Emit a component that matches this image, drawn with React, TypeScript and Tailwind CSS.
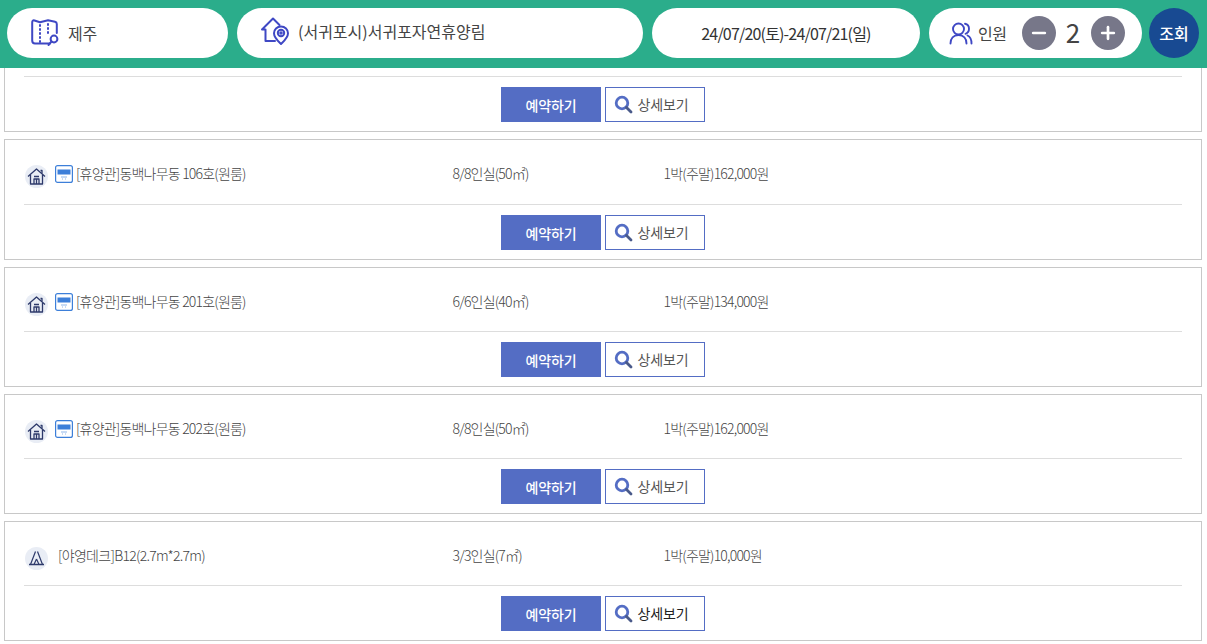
import { Minus, Plus } from "lucide-react";

const font = "font-['Noto_Sans_CJK_KR','Noto_Sans',sans-serif]";

function MapIcon() {
  return (
    <svg width="30" height="30" viewBox="0 0 30 30" fill="none" stroke="#3f48c4" strokeWidth="2" strokeLinecap="round" strokeLinejoin="round">
      <path d="M20 25.500H5c-2 0-2.800-1.200-2.800-3V4.500C2.200 3 3 2 4.500 2.500L10 4.200 18 2.200 25 3.800c1.200.3 1.800 1 1.800 2.200V15" />
      <path d="M10 7v1M10 11v1M10 15v1M10 19v1M10 23v1M18 6v1M18 10v1M18 14v1" strokeDasharray="1 1" />
      <circle cx="24" cy="21" r="3.400" />
      <path d="M21.500 23.500L18.500 27" />
    </svg>
  );
}

function HomePinIcon() {
  return (
    <svg width="30" height="30" viewBox="0 0 30 30" fill="none" stroke="#3f48c4" strokeWidth="2" strokeLinecap="round" strokeLinejoin="round">
      <path d="M15 25H5.500V13.500H2L13 2.500 19.500 9" />
      <path d="M21 10.500c-4 0-7 3-7 6.800 0 4.500 4.500 8.200 7 10.700 2.500-2.500 7-6.200 7-10.700 0-3.800-3-6.800-7-6.800z" />
      <circle cx="21" cy="17" r="3.200" />
      <circle cx="21" cy="17" r=".8" />
    </svg>
  );
}

function PeopleIcon() {
  return (
    <svg width="24" height="24" viewBox="0 0 24 24" fill="none" stroke="#3f48c4" strokeWidth="1.900" strokeLinecap="round" strokeLinejoin="round">
      <circle cx="9.500" cy="8" r="5.500" />
      <path d="M1.500 22.500c0-5 3-8.500 8-8.500s8 3.500 8 8.500" />
      <path d="M16 2.800c2.600.5 4 2.600 4 5 0 2.300-1.300 4.300-3.500 5" />
      <path d="M18.500 14.500c2.600 1.200 4 4 4 8" />
    </svg>
  );
}

function HouseBadge() {
  return (
    <span className="ml-[1px] mt-[6px] flex h-[23px] w-[23px] shrink-0 items-center justify-center rounded-full bg-[#e9edf5]">
      <svg width="19" height="19" viewBox="0 0 19 19" fill="none" stroke="#2e3a6b" strokeWidth="1.300" strokeLinejoin="round">
        <path d="M1 9.500L9.500 2 18 9.500" />
        <path d="M3.500 8v9h12V8" />
        <path d="M7 17v-5h5v5M9.500 12v5M7 9.500h5" />
        <path d="M13.500 3.500H15v3" />
      </svg>
    </span>
  );
}

function TentBadge() {
  return (
    <span className="ml-[1px] mt-[6px] flex h-[23px] w-[23px] shrink-0 items-center justify-center rounded-full bg-[#e9edf5]">
      <svg width="17" height="17" viewBox="0 0 17 17" fill="none" stroke="#2e3a6b" strokeWidth="1.200" strokeLinejoin="round">
        <path d="M7.500 1.500L2.500 14.500M9.500 1.500l5 13" />
        <path d="M8.500 9L6 14.500M8.500 9l2.500 5.500" />
        <path d="M1 14.500h15" strokeWidth="1.500" />
      </svg>
    </span>
  );
}

function AcIcon() {
  return (
    <svg width="18" height="18" viewBox="0 0 18 18" className="block shrink-0">
      <rect x=".6" y=".6" width="16.800" height="16.800" rx="2" fill="#fff" stroke="#3d7fd9" strokeWidth="1.200" />
      <rect x="2.500" y="4.500" width="13" height="5" fill="#3d7fd9" />
      <path d="M6 12h6M7 14h1M10 14h1" stroke="#8fb6ea" strokeWidth="1" />
    </svg>
  );
}

function Actions({ dark }: { dark?: boolean }) {
  return (
    <div className="flex justify-center gap-1">
      <button className="h-[35px] w-[100px] bg-[#546dc4] pt-[2px] text-[14px] font-medium tracking-[-0.1px] text-white">예약하기</button>
      <button className={`flex h-[35px] w-[100px] items-center justify-center gap-[4px] border border-[#546dc4] bg-white pb-[1px] pr-[7px] text-[14px] tracking-[-0.1px] ${dark ? "text-[#222]" : "text-[#555]"}`}>
        <svg width="19" height="19" viewBox="0 0 19 19" fill="none" strokeLinecap="round">
          <circle cx="8" cy="8" r="5.800" stroke="#546dc4" strokeWidth="2.800" />
          <path d="M12.500 12.500L17 17" stroke="#4a5a8a" strokeWidth="2.800" />
        </svg>
        상세보기
      </button>
    </div>
  );
}

type Room = { name: string; cap: string; price: string; tent?: boolean; h: string; row: string };

const rooms: Room[] = [
  { name: "[휴양관]동백나무동 106호(원룸)", cap: "8/8인실(50㎡)", price: "1박(주말)162,000원", h: "h-[121px]", row: "h-[65px] pt-[3px]" },
  { name: "[휴양관]동백나무동 201호(원룸)", cap: "6/6인실(40㎡)", price: "1박(주말)134,000원", h: "h-[120px]", row: "h-[64px] pt-[4px]" },
  { name: "[휴양관]동백나무동 202호(원룸)", cap: "8/8인실(50㎡)", price: "1박(주말)162,000원", h: "h-[120px]", row: "h-[64px] pt-[4px]" },
  { name: "[야영데크]B12(2.7m*2.7m)", cap: "3/3인실(7㎡)", price: "1박(주말)10,000원", tent: true, h: "h-[120px]", row: "h-[64px] pt-[4px]" },
];

function RoomCard({ room, last }: { room: Room; last?: boolean }) {
  return (
    <div className={`${room.h} border border-[#c8c8c8] px-[19px]`}>
      <div className={`${room.row} flex items-center border-b border-[#ddd] text-[14px] font-light tracking-[-0.8px] text-[#444]`}>
        <div className="flex w-[428px] items-center">
          {room.tent ? <TentBadge /> : <HouseBadge />}
          {!room.tent && <span className="ml-[7px]"><AcIcon /></span>}
          <span className={`${room.tent ? "ml-[10px] tracking-[-0.7px]" : "ml-[3px]"}`}>{room.name}</span>
        </div>
        <div className="w-[212px] pl-[0.5px]">{room.cap}</div>
        <div className="ml-[-0.5px]">{room.price}</div>
      </div>
      <div className="pt-[10px]">
        <Actions dark={last} />
      </div>
    </div>
  );
}

export default function App() {
  return (
    <div className={`h-[644px] w-[1207px] overflow-hidden bg-white ${font}`}>
      <header className="flex h-[68px] items-start gap-[9px] bg-[#2bad8b] pl-[7px] pt-[8px]">
        <div className="flex h-[50px] w-[221px] items-center gap-[8px] rounded-full bg-white pl-[23px] text-[16px] tracking-[-0.3px] text-[#444]">
          <MapIcon />
          제주
        </div>
        <div className="flex h-[50px] w-[406px] items-center gap-[8px] rounded-full bg-white pb-[4px] pl-[23px] text-[16px] text-[#444]">
          <HomePinIcon />
          (서귀포시)서귀포자연휴양림
        </div>
        <div className="flex h-[50px] w-[268px] items-center justify-center rounded-full bg-white text-[16px] tracking-[-0.82px] text-[#333]">
          24/07/20(토)-24/07/21(일)
        </div>
        <div className="flex h-[50px] w-[213px] items-center rounded-full bg-white pl-[20px] text-[15px] text-[#444]">
          <PeopleIcon />
          <span className="ml-[5px] text-[16px] tracking-[-0.5px]">인원</span>
          <span className="ml-[16px] flex h-[34px] w-[34px] items-center justify-center rounded-full bg-[#777789]">
            <Minus size={20} strokeWidth={3.2} className="text-white" />
          </span>
          <span className="w-[35px] pb-[2px] pr-[2px] text-center text-[26px] leading-none text-[#444]">2</span>
          <span className="flex h-[34px] w-[34px] items-center justify-center rounded-full bg-[#777789]">
            <Plus size={20} strokeWidth={3.2} className="text-white" />
          </span>
        </div>
        <button className="ml-[-2px] h-[50px] w-[50px] rounded-full bg-[#184a92] text-[16px] font-medium text-white">조회</button>
      </header>
      <div className="flex flex-col gap-[7px] pl-[4px] pr-[5px]">
        <div className="h-[64px] border-x border-b border-[#c8c8c8] px-[19px] pt-[8px]">
          <div className="border-t border-[#ddd] pt-[10px]">
            <Actions />
          </div>
        </div>
        {rooms.map((r, i) => (
          <RoomCard key={r.name} room={r} last={i === rooms.length - 1} />
        ))}
      </div>
    </div>
  );
}
